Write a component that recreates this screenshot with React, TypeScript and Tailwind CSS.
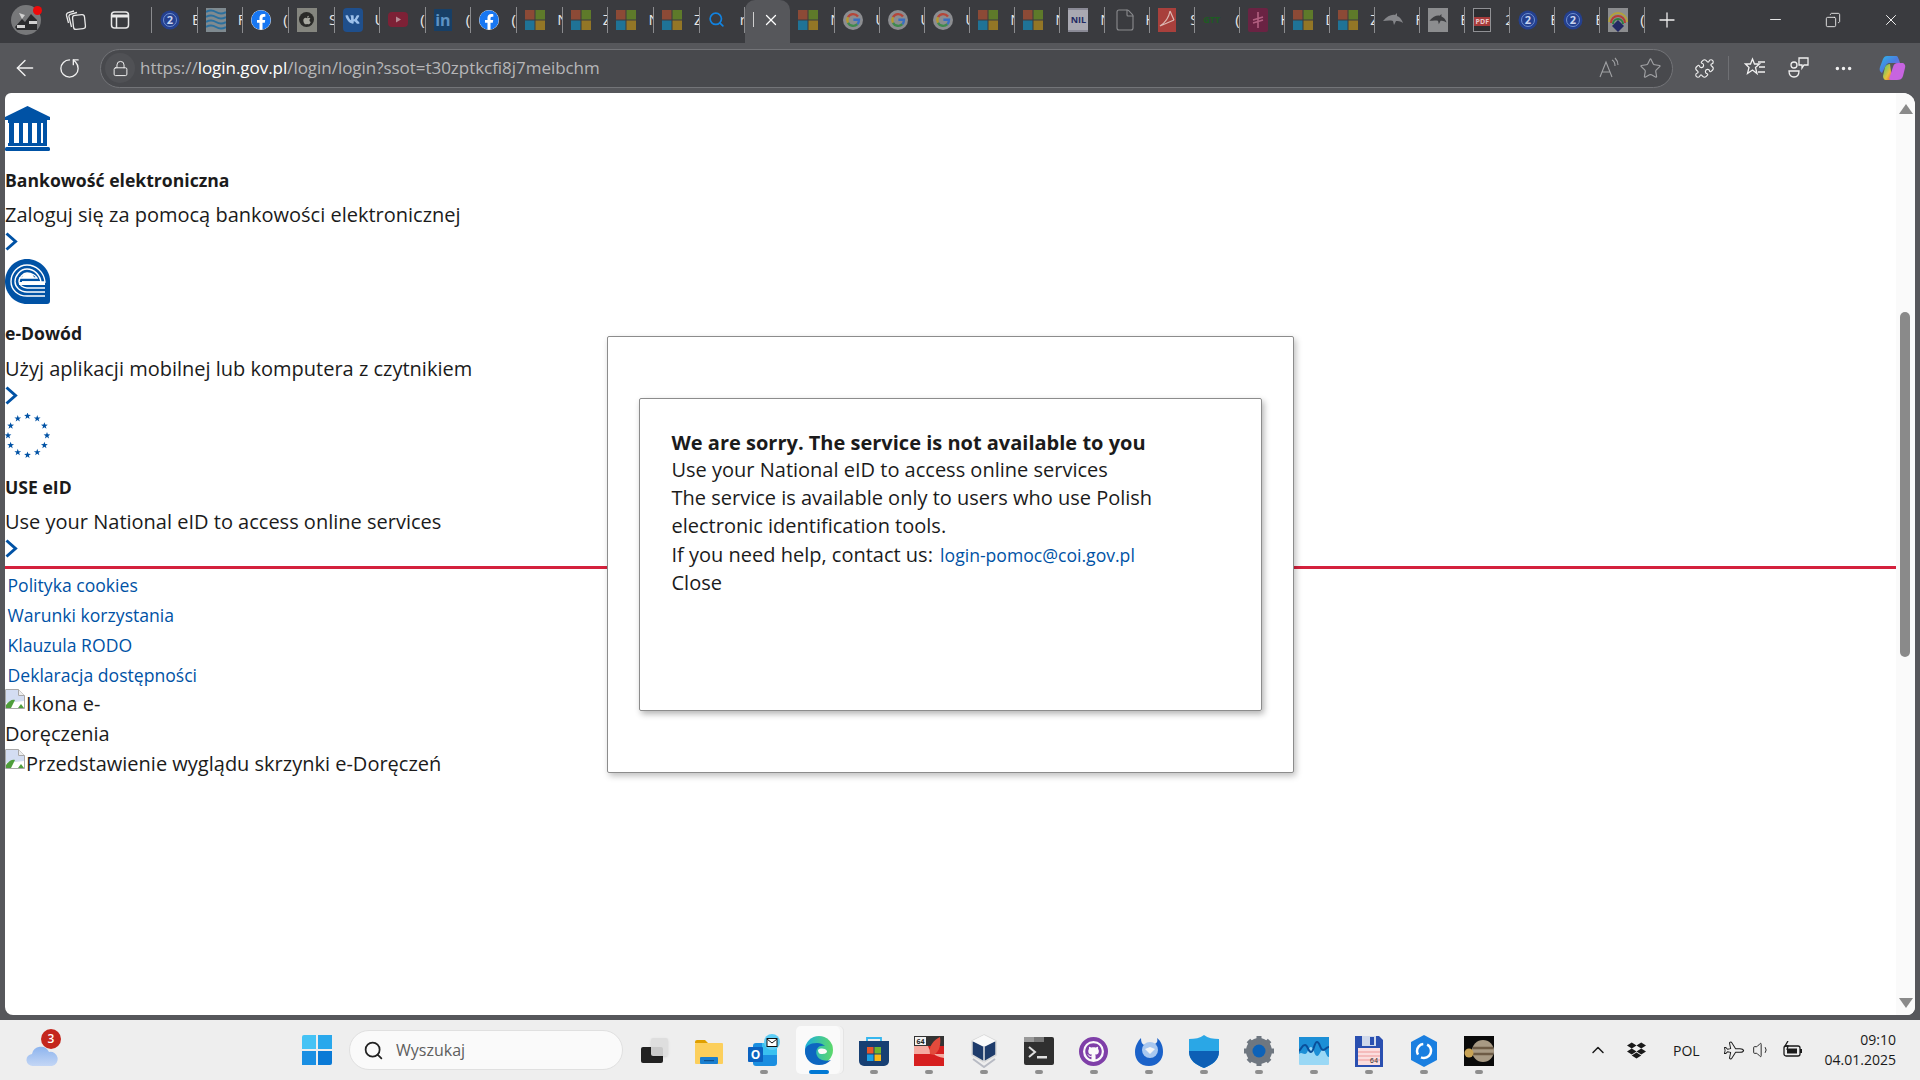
import React from "react";
import { ArrowLeft, RotateCw, Lock, Star, Plus, Minus, X, Search, ChevronUp, Ellipsis, Copy, File, Puzzle, Volume1, Plane } from "lucide-react";
import { FaFacebook, FaVk, FaApple, FaDropbox, FaGithub } from "react-icons/fa";

const MS = () => (
  <svg width="20" height="20" viewBox="0 0 20 20"><rect width="9.5" height="9.5" fill="#8c4a36"/><rect x="10.5" width="9.5" height="9.5" fill="#5e7a2a"/><rect y="10.5" width="9.5" height="9.5" fill="#1f7396"/><rect x="10.5" y="10.5" width="9.5" height="9.5" fill="#937626"/></svg>
);
const Two = () => (
  <svg width="20" height="20" viewBox="0 0 20 20"><circle cx="10" cy="10" r="9.5" fill="#24408f"/><circle cx="10" cy="10" r="6.5" fill="none" stroke="#6f8fd0" strokeWidth="1"/><text x="10" y="14" textAnchor="middle" fontSize="11" fontWeight="700" fill="#c9d5f0" fontFamily="Open Sans">2</text></svg>
);
const G = () => (
  <svg width="20" height="20" viewBox="0 0 20 20"><circle cx="10" cy="10" r="10" fill="#8c8d90"/><path d="M15 6.5A6 6 0 0 0 5 7.2" fill="none" stroke="#b5463a" strokeWidth="2.4"/><path d="M5 7.2a6 6 0 0 0 0 5.6" fill="none" stroke="#b59a2e" strokeWidth="2.4"/><path d="M5 12.8a6 6 0 0 0 9.4 1.4" fill="none" stroke="#3f8a4d" strokeWidth="2.4"/><path d="M10.4 9.8H16c0 2-.6 3.4-1.6 4.4" fill="none" stroke="#3a6fc0" strokeWidth="2.4"/></svg>
);
const Waves = () => (
  <svg width="20" height="24" viewBox="0 0 20 24"><rect width="20" height="24" fill="#7f8a90"/>{[4,9,14,19].map(y=><path key={y} d={`M0 ${y}q5 -3 10 0t10 0`} fill="none" stroke="#2a6f9e" strokeWidth="2"/>)}</svg>
);
const Apple = () => (<div className="w-[20px] h-[24px] bg-[#85867f] flex items-center justify-center"><div className="w-[15px] h-[15px] rounded-full bg-[#2a2a28] flex items-center justify-center"><FaApple size={10} color="#a8a8a0" /></div></div>);
const Vk = () => (<div className="w-[20px] h-[24px] rounded-[4px] bg-[#1f4f8c] flex items-center justify-center"><FaVk size={15} color="#9cc0ea" /></div>);
const Yt = () => (<svg width="20" height="15" viewBox="0 0 20 15"><rect width="20" height="15" rx="4" fill="#7d2136"/><path d="M8 4.500 13 7.500 8 10.500z" fill="#b58a94"/></svg>);
const In = () => (<div className="w-[18px] h-[22px] bg-[#173f66] flex items-center justify-center text-[16px] font-bold text-[#5e93c4] leading-none">in</div>);
const Fb = () => (<FaFacebook size={20} color="#1877f2" className="bg-white rounded-full" />);
const SearchI = () => (<Search size={17} color="#1283e0" strokeWidth={2.4} />);
const Nil = () => (<div className="w-[20px] h-[24px] bg-[#a9a9b2] border-y-2 border-[#8a8a96] flex items-center justify-center text-[9px] font-bold text-[#232a63] leading-none">NIL</div>);
const Doc = () => (<File size={24} color="#8a8b8e" strokeWidth={1.1} />);
const Pdfr = () => (<svg width="18" height="24" viewBox="0 0 18 24"><rect width="18" height="24" fill="#a8403c"/><path d="M2 18C8 14 11 9 12 3M2 18l14-6M12 3l4 9" stroke="#dcb8b3" strokeWidth="1.2" fill="none"/></svg>);
const Gtt = () => (<span className="text-[9px] font-bold text-[#1d5c22] leading-none w-[20px] block">GTT</span>);
const Pink = () => (<svg width="20" height="24" viewBox="0 0 20 24"><rect width="20" height="24" rx="2" fill="#6a2343"/><path d="M10 4v16M5 12l10-3M5 15l10-3" stroke="#b25f80" strokeWidth="1.6"/></svg>);
const Dolphin = () => (<svg width="20" height="14" viewBox="0 0 20 14"><path d="M0 8C4 3 9 1 12 2l2-2 0 3c3 1 5 4 6 7-3-2-5-2-7-2l-2 4-1-4C6 7 3 8 0 8z" fill="#85868a"/></svg>);
const Dolphin2 = () => (<div className="w-[20px] h-[24px] bg-[#8c8d8f] flex items-center justify-center"><svg width="18" height="12" viewBox="0 0 20 14"><path d="M0 8C4 3 9 1 12 2l2-2 0 3c3 1 5 4 6 7-3-2-5-2-7-2l-2 4-1-4C6 7 3 8 0 8z" fill="#3c3d40"/></svg></div>);
const Pdf = () => (<div className="w-[18px] h-[24px] bg-[#2d2e31] border border-[#909195] flex items-end justify-center pb-[5px]"><span className="w-full bg-[#a83b3b] text-[7px] font-bold text-[#e9c9c9] text-center leading-[9px]">PDF</span></div>);
const Rainbow = () => (<svg width="20" height="24" viewBox="0 0 20 24"><rect width="20" height="24" fill="#8c8d8f"/><path d="M1 14a9 9 0 0 1 18 0" fill="none" stroke="#b3a23a" strokeWidth="2"/><path d="M3 15a7 7 0 0 1 14 0" fill="none" stroke="#b53c36" strokeWidth="2"/><path d="M5 16a5 5 0 0 1 10 0" fill="none" stroke="#2f7f3f" strokeWidth="2"/><path d="M10 12l6 6-6 6-6-6z" fill="#232a63"/></svg>);

const tabs: [React.ReactNode, string][] = [
  [<Two />, "E"], [<Waves />, "F"], [<Fb />, "("], [<Apple />, "S"], [<Vk />, "U"], [<Yt />, "("], [<In />, "("], [<Fb />, "("],
  [<MS />, "N"], [<MS />, "Z"], [<MS />, "N"], [<MS />, "Z"], [<SearchI />, "r"],
];
const tabs2: [React.ReactNode, string][] = [
  [<MS />, "N"], [<G />, "U"], [<G />, "U"], [<G />, "U"], [<MS />, "N"], [<MS />, "N"], [<Nil />, "N"], [<Doc />, "H"], [<Pdfr />, "S"], [<Gtt />, "("], [<Pink />, "H"],
  [<MS />, "D"], [<MS />, "Z"], [<Dolphin />, "F"], [<Dolphin2 />, "E"], [<Pdf />, "2"], [<Two />, "E"], [<Two />, "E"], [<Rainbow />, "("],
];

const Tab = ({ icon, t, w }: { icon: React.ReactNode; t: string; w: string }) => (
  <div className={`${w} h-[26px] shrink-0 flex items-center border-r border-[#8a8b8e] overflow-hidden text-[#e8e8e8] text-[15px]`}>
    <div className="w-[38px] shrink-0 pl-[8px] flex items-center">{icon}</div>
    <span className="shrink-0 pl-[2px]">{t}</span>
  </div>
);

const Chevron = () => (
  <svg width="13" height="19" viewBox="0 0 13 19"><path d="M1.5 1.5 10.5 9.5 1.5 17.5" fill="none" stroke="#0052a5" strokeWidth="3"/></svg>
);

const Bank = () => (
  <svg width="45" height="45" viewBox="0 0 45 45" fill="#0052a5"><path d="M22.5 0 45 11v3H0v-3z"/><rect x="3" y="14" width="39" height="3"/><rect x="4" y="17" width="5" height="20"/><rect x="14" y="17" width="4" height="20"/><rect x="23" y="17" width="4" height="20"/><rect x="32" y="17" width="4" height="20"/><rect x="38" y="17" width="4" height="20"/><rect x="3" y="37" width="39" height="3"/><rect x="0" y="41" width="45" height="4" rx="1.5"/></svg>
);
const EDowod = () => (
  <svg width="45" height="45" viewBox="0 0 45 45"><path d="M22 0C10 0 0 10 0 22.5S10 45 22 45h20a3 3 0 0 0 3-3V22C45 10 34 0 22 0z" fill="#0052a5"/><path d="M40 37H22C13 37 6 31 6 22.5S13 6 22 6s17 7 18 17H17" fill="none" stroke="#fff" strokeWidth="1.4"/><path d="M40 33H22c-7 0-12-5-12-10.5S15 10 22 10s13 6 14 13H17" fill="none" stroke="#fff" strokeWidth="1.4"/><path d="M40 29H22c-4 0-8-3-8-6.500S18 14 22 14c5 0 9 3 10 5H14" fill="none" stroke="#fff" strokeWidth="1.4"/><path d="M17 19a6 5 0 0 1 12 0z" fill="#fff"/><rect x="14" y="23" width="26" height="3" fill="#fff"/></svg>
);
const EuStars = () => {
  const star = "M0-3.600.85-1.150 3.400-1.100 1.350.45 2.100 2.900 0 1.450-2.100 2.900-1.350.45-3.400-1.100-.85-1.150z";
  return (
    <svg width="45" height="45" viewBox="0 0 45 45" fill="#0052a5">
      {Array.from({ length: 12 }).map((_, i) => {
        const a = (i * Math.PI) / 6;
        return <path key={i} d={star} transform={`translate(${22.500 + 19.500 * Math.sin(a)} ${22.500 - 19.500 * Math.cos(a)})`} />;
      })}
    </svg>
  );
};
const Broken = () => (
  <svg width="20" height="20" viewBox="0 0 20 20" className="inline-block align-top shrink-0 mr-[1px]"><path d="M.5.5h13l6 6v13H.5z" fill="#fff" stroke="#a8a8a8"/><path d="M13.500.5v6h6" fill="#eee" stroke="#a8a8a8"/><path d="M1 1h12v6h6v5L1 14z" fill="#d3ddf2"/><path d="M1 19v-3c3-4 6-6 9-5l-4 8z" fill="#4f9e3c"/><path d="M13 19l3-4 3 4z" fill="#4f9e3c"/></svg>
);

const Item = ({ icon, title, desc, pb, dm = "mt-[8px]" }: { icon: React.ReactNode; title: string; desc: string; pb: string; dm?: string }) => (
  <div className={pb}>
    <div className="h-[45px]">{icon}</div>
    <div className="mt-[16px] h-[26px] leading-[26px] text-[17.6px] font-bold text-[#1b1b1b]">{title}</div>
    <div className={`${dm} h-[28px] leading-[28px] text-[20px] text-[#1b1b1b]`}>{desc}</div>
    <div className="mt-[3px] h-[19px]"><Chevron /></div>
  </div>
);

const Slot = ({ children, dot = true, active = false }: { children: React.ReactNode; dot?: boolean; active?: boolean }) => (
  <div className="w-[55px] h-[52px] shrink-0 flex flex-col items-center pt-[6px] relative">
    {active && <div className="absolute top-[-2px] left-[5px] w-[44px] h-[48px] bg-[#fafafa] rounded-[5px] shadow-[3px_0_0_#f4f4f4,4px_0_0_#e4e4e4]" />}
    <div className="h-[34px] w-[34px] flex items-center justify-center relative">{children}</div>
    {dot && <div className={`absolute bottom-[6px] h-[4px] rounded-full ${active ? "w-[20px] bg-[#0078d4]" : "w-[8px] bg-[#8e8e8e]"}`} />}
  </div>
);

export default function App() {
  return (
    <div className="w-[1920px] h-[1080px] overflow-hidden flex flex-col font-['Open_Sans',sans-serif] bg-[#56575b]">
      {/* Tab strip */}
      <div className="h-[43px] shrink-0 bg-[#3a3b3f] flex items-center pl-[10px] pb-[4px]">
        <div className="w-[30px] h-[30px] rounded-full bg-[#77787a] relative overflow-visible shrink-0 ml-[1px] -mr-[1px]">
          <svg width="30" height="30" viewBox="0 0 30 30" className="rounded-full"><path d="M4 22l7-8 3 3 6-8 6 6v10H6z" fill="#2a2b2d"/><path d="M8 8l6 2-3 4zM18 16h8v3h-8zM6 20h8v3H6z" fill="#d0d0d0"/></svg>
          <div className="absolute top-[1px] right-[-1px] w-[9px] h-[9px] rounded-full bg-[#ee0a0a]" />
        </div>
        <div className="ml-[24px] w-[24px] flex justify-center">
          <svg width="22" height="22" viewBox="0 0 22 22" fill="none" stroke="#e8e8e8" strokeWidth="1.3"><rect x="8" y="6" width="12" height="14" rx="2.500" transform="rotate(-6 14 13)"/><path d="M6.500 18 4 8c-.3-1.500.5-2.500 2-3l6-1.500M3.500 14 1.500 6.500C1.200 5 2 4 3.500 3.500L9 2"/></svg>
        </div>
        <div className="ml-[21px] mr-[1px] w-[22px] flex justify-center">
          <svg width="20" height="20" viewBox="0 0 20 20" fill="none" stroke="#e8e8e8" strokeWidth="1.500"><rect x="1.500" y="2" width="17" height="16" rx="3"/><path d="M6.500 6v12"/><path d="M1.500 6h17" strokeWidth="3"/></svg>
        </div>
        <div className="ml-[19px] flex items-center w-[1494px] shrink-0 border-l border-[#8a8b8e] h-[26px]">
          {tabs.map(([ic, t], i) => <Tab key={i} icon={ic} t={t} w="w-[45.65px]" />)}
          <div className="w-[45px] h-[43px] shrink-0 -mt-[7px] pb-[3px] bg-[#56575b] rounded-t-[10px] flex items-center text-[#e8e8e8] self-start">
            <span className="ml-[8px] mr-[8px] w-[1px] h-[15px] bg-[#cfcfcf]" />
            <X size={18} strokeWidth={1.700} color="#ffffff" />
          </div>
          {tabs2.map(([ic, t], i) => <Tab key={i} icon={ic} t={t} w="w-[45px]" />)}
        </div>
        <Plus size={24} strokeWidth={1.300} color="#efefef" className="ml-[10px] shrink-0" />
        <div className="ml-auto flex items-center text-[#f5f5f5]">
          <Minus size={17} strokeWidth={1.300} />
          <div className="ml-[41px]"><Copy size={16} strokeWidth={1.300} className="-scale-x-100" /></div>
          <div className="ml-[41px] mr-[20px]"><X size={18} strokeWidth={1.300} /></div>
        </div>
      </div>
      {/* Address row */}
      <div className="h-[50px] shrink-0 bg-[#56575b] flex items-center pl-[12px] pr-[7px]">
        <ArrowLeft size={26} strokeWidth={1.300} color="#f0f0f0" />
        <RotateCw size={23} strokeWidth={1.400} color="#f0f0f0" className="ml-[20px] -scale-x-100 rotate-[90deg]" />
        <div className="ml-[19px] w-[1573px] h-[39px] rounded-full bg-[#48494d] border border-[#737478] flex items-center pl-[4px] pr-[10px]">
          <div className="w-[30px] h-[30px] rounded-full bg-[#505155] flex items-center justify-center shrink-0">
            <Lock size={17} strokeWidth={1.400} color="#f0f0f0" />
          </div>
          <div className="ml-[5px] text-[17px] text-[#b6b6b8] whitespace-nowrap tracking-[-0.04px]">https://<span className="text-[#ffffff]">login.gov.pl</span>/login/login?ssot=t30zptkcfi8j7meibchm</div>
          <div className="ml-auto flex items-center gap-[18px] text-[#a0a1a4]">
            <svg width="22" height="22" viewBox="0 0 22 22" fill="none" stroke="#a0a1a4" strokeWidth="1.100"><path d="M1 20 7 5l6 15M3 15h8"/><path d="M13 3c2 1 3 3 3 6M16 1c2 2 3 4 3 7"/></svg>
            <Star size={23} strokeWidth={1.200} />
          </div>
        </div>
        <Puzzle size={21} strokeWidth={1.300} color="#f0f0f0" className="ml-[21px]" />
        <div className="ml-[13px] w-[1px] h-[24px] bg-[#6f7074]" />
        <div className="ml-[15px] relative w-[22px] h-[22px]">
          <svg width="22" height="22" viewBox="0 0 22 22" fill="none" stroke="#f0f0f0" strokeWidth="1.300"><path d="M8.500 2l2 5h5l-4 3.500 1.500 6-4.500-3.500-5 3.500 1.500-6L1.500 7h5z"/><path d="M14 5h7M15 10h6M14 15h7"/></svg>
        </div>
        <div className="ml-[22px] w-[22px] h-[24px]">
          <svg width="22" height="24" viewBox="0 0 22 24" fill="none" stroke="#f0f0f0" strokeWidth="1.300"><circle cx="6" cy="9" r="3"/><path d="M1 15h10c0 4-2 6-5 6s-5-2-5-6z"/><path d="M11 2h9v7h-4l-2 3v-3h-3z"/></svg>
        </div>
        <Ellipsis size={21} color="#f0f0f0" className="ml-[23px]" />
        <div className="ml-[24px] w-[28px] h-[28px]">
          <svg width="28" height="28" viewBox="0 0 28 28"><defs><linearGradient id="cp1" x1="0" y1="0" x2="1" y2="1"><stop offset="0" stopColor="#2bb8ea"/><stop offset=".5" stopColor="#4c7de0"/><stop offset="1" stopColor="#b45ad8"/></linearGradient><linearGradient id="cp2" x1="0" y1="0" x2="1" y2="1"><stop offset="0" stopColor="#38c77b"/><stop offset=".6" stopColor="#e6c23a"/><stop offset="1" stopColor="#ee5a3a"/></linearGradient></defs><path d="M9 2h9c2 0 2 2 3 4l1 3H12C9 9 8 11 7 13l-3 6c-2-1-3-3-2-6l3-8c1-2 2-3 4-3z" fill="url(#cp1)"/><path d="M14 26H8c-2 0-3-2-3-4l2-9c1-2 3-3 5-3l1 8c0 3 1 6 1 8z" fill="url(#cp2)"/><path d="M19 26h-6c-2 0-2-2-1-4l3-9c1-3 2-4 5-4h4c2 0 4 2 3 5l-2 8c-1 3-3 4-6 4z" fill="#c764e0"/></svg>
        </div>
      </div>
      {/* Page */}
      <div className="h-[922px] shrink-0 px-[5px]">
        <div className="relative h-full bg-white rounded-tl-[6px] rounded-tr-[12px] rounded-b-[8px] overflow-hidden flex">
          <div className="flex-1 min-w-0 pt-[13px] text-[#1b1b1b]">
            <Item pb="pb-[8px]" icon={<Bank />} title="Bankowość elektroniczna" desc="Zaloguj się za pomocą bankowości elektronicznej" />
            <Item pb="pb-[8px]" dm="mt-[9px]" icon={<EDowod />} title="e-Dowód" desc="Użyj aplikacji mobilnej lub komputera z czytnikiem" />
            <Item pb="pb-[8px]" icon={<EuStars />} title="USE eID" desc="Use your National eID to access online services" />
            <div className="border-t-[3px] border-[#d4213d] pt-[1px] pl-[2.500px] text-[17.6px] leading-[30px] text-[#0052a5]">
              <div>Polityka cookies</div>
              <div>Warunki korzystania</div>
              <div>Klauzula RODO</div>
              <div>Deklaracja dostępności</div>
            </div>
            <div className="text-[20px] leading-[30px] -mt-[1px]">
              <div className="w-[120px]"><Broken />Ikona e-Doręczenia</div>
              <div><Broken />Przedstawienie wyglądu skrzynki e-Doręczeń</div>
            </div>
          </div>
          <div className="w-[19px] shrink-0 bg-[#fafafa] flex flex-col items-center pt-[11px] pb-[7px]">
            <svg width="14" height="10" viewBox="0 0 14 10"><path d="M7 0l7 10H0z" fill="#8a8a8a"/></svg>
            <div className="mt-[198px] ml-[-1px] w-[10px] h-[345px] rounded-full bg-[#8a8a8a]" />
            <svg width="14" height="10" viewBox="0 0 14 10" className="mt-auto"><path d="M0 0h14L7 10z" fill="#8a8a8a"/></svg>
          </div>
          {/* Modal */}
          <div className="absolute left-[602px] top-[243px] w-[687px] h-[437px] bg-white border border-[#8c8c8c] rounded-[2px] shadow-[2px_3px_6px_rgba(0,0,0,0.25)] pl-[31px] pt-[61px]">
            <div className="w-[623px] h-[313px] border border-[#8c8c8c] rounded-[2px] shadow-[2px_3px_6px_rgba(0,0,0,0.3)] pl-[31.500px] pt-[30px] text-[20px] leading-[28px] text-[#1b1b1b]">
              <div className="font-bold h-[27px]">We are sorry. The service is not available to you</div>
              <div className="w-[520px]">Use your National eID to access online services</div>
              <div className="w-[520px]">The service is available only to users who use Polish electronic identification tools.</div>
              <div className="mt-[1px]">If you need help, contact us: <span className="ml-[2px] text-[17.6px] text-[#0052a5]">login-pomoc@coi.gov.pl</span></div>
              <div>Close</div>
            </div>
          </div>
        </div>
      </div>
      <div className="h-[5px] shrink-0 bg-[#56575b]" />
      {/* Taskbar */}
      <div className="h-[60px] shrink-0 bg-[#eeeeee] flex items-center relative">
        <div className="ml-[26px] w-[32px] h-[36px] relative shrink-0">
          <svg width="32" height="24" viewBox="0 0 32 24" className="absolute bottom-0 left-0"><defs><linearGradient id="cl" x1="0" y1="0" x2="0" y2="1"><stop offset="0" stopColor="#8db4ee"/><stop offset="1" stopColor="#c3d6f5"/></linearGradient></defs><path d="M7 22a6 6 0 0 1-1-12 9 9 0 0 1 17-2 7 7 0 0 1 3 14z" fill="url(#cl)"/></svg>
          <div className="absolute top-[-3px] right-[-3px] w-[20px] h-[20px] rounded-full bg-[#c4261d] text-white text-[12px] font-semibold flex items-center justify-center">3</div>
        </div>
        <div className="ml-[244px] w-[30px] h-[30px] grid grid-cols-2 gap-[1.500px] shrink-0">
          <div className="bg-[#45c3f5] rounded-tl-[2px]" /><div className="bg-[#29a8ec]" /><div className="bg-[#1a8fe3]" /><div className="bg-[#0a7ad6] rounded-br-[2px]" />
        </div>
        <div className="ml-[17px] w-[274px] h-[40px] rounded-full bg-[#fafafa] border border-[#e0e0e0] flex items-center pl-[13px] shrink-0">
          <Search size={21} strokeWidth={2} color="#222" />
          <span className="ml-[12px] text-[16px] text-[#5e5e5e]">Wyszukaj</span>
        </div>
        <div className="ml-[3px] flex items-end h-[52px] self-end">
          <Slot dot={false}><div className="relative w-[26px] h-[24px]"><div className="absolute left-0 bottom-0 w-[22px] h-[16px] bg-[#222] rounded-[2px]" /><div className="absolute right-[-1px] top-[-1px] w-[17px] h-[18px] bg-[#dcdcdc]/90 rounded-[2px] shadow" /></div></Slot>
          <Slot dot={false}><svg width="30" height="28" viewBox="0 0 30 28"><path d="M1 5a2 2 0 0 1 2-2h8l3 3h-13z" fill="#e0a000"/><rect x="1" y="6" width="28" height="21" rx="1" fill="#fccf5c"/><rect x="6" y="20" width="18" height="7" rx="1" fill="#1a7fd0"/><rect x="10" y="23" width="10" height="1.200" fill="#0d4f8c"/></svg></Slot>
          <Slot><svg width="36" height="34" viewBox="0 0 36 34" className="shrink-0 ml-[3px]"><rect x="6" y="9" width="24" height="23" rx="3" fill="#1a8ee0"/><path d="M15 9h15v12H15z" fill="#39c1f0"/><circle cx="25" cy="8" r="8" fill="#5fcdf5"/><rect x="20" y="4.500" width="10" height="8" fill="#fff" stroke="#111"/><path d="M20 5l5 4 5-4" fill="none" stroke="#111"/><rect x="1" y="13" width="15" height="15" rx="1" fill="#0b62c0"/><text x="8.500" y="25" textAnchor="middle" fontSize="12" fontWeight="700" fill="#fff" fontFamily="Open Sans">O</text></svg></Slot>
          <Slot active><svg width="30" height="30" viewBox="0 0 30 30"><defs><linearGradient id="ed" x1="0" y1="0" x2="1" y2="0"><stop offset="0" stopColor="#1baedb"/><stop offset="1" stopColor="#5dd96a"/></linearGradient></defs><circle cx="15" cy="14" r="14" fill="url(#ed)"/><path d="M1 15c0 8 6 14 14 14 5 0 9-2 12-5-3 1-8 1-11-1-3-2-5-6-3-10 1-3 5-4 8-3-2-2-5-3-8-3C6 7 1 10 1 15z" fill="#0d66c0"/><path d="M14 14c2-2 7-2 9 1 0 3-4 3-6 3-2 0-3-2-3-4z" fill="#fafafa"/></svg></Slot>
          <Slot><svg width="30" height="30" viewBox="0 0 30 30"><path d="M8 6V2h14v4" fill="none" stroke="#35b6ee" strokeWidth="1.800"/><path d="M0 5h30v20a5 5 0 0 1-5 5H5a5 5 0 0 1-5-5z" fill="#173f73"/><rect x="8" y="11" width="6.500" height="6.500" fill="#e8562a"/><rect x="15.500" y="11" width="6.500" height="6.500" fill="#6eb52e"/><rect x="8" y="18.500" width="6.500" height="6.500" fill="#1aa1e6"/><rect x="15.500" y="18.500" width="6.500" height="6.500" fill="#f9b916"/></svg></Slot>
          <Slot><svg width="30" height="30" viewBox="0 0 30 30"><rect width="30" height="30" fill="#333"/><path d="M0 10h30v20H0z" fill="#d61f1f"/><path d="M0 10h14c2 6 6 10 16 12v-4H0z" fill="#f5aaa0"/><path d="M16 18C14 10 20 4 26 1c1 6 0 14-6 18z" fill="#e24b3c"/><rect x="1" y="1" width="11" height="8" fill="#f2f2f2"/><text x="6.500" y="8" textAnchor="middle" fontSize="7" fontWeight="700" fill="#222" fontFamily="Open Sans">64</text></svg></Slot>
          <Slot><svg width="28" height="34" viewBox="0 0 28 34"><path d="M14 1 26 7v14l-12 7L2 21V7z" fill="#1f3c6b" stroke="#d8d8d8" strokeWidth="1.500"/><path d="M14 1 26 7l-12 6L2 7z" fill="#fafafa"/><path d="M14 13v15" stroke="#e8e8e8" strokeWidth="1.500"/><path d="M3 25l11 8 11-8" fill="none" stroke="#b8bbc4" strokeWidth="2"/></svg></Slot>
          <Slot><svg width="30" height="28" viewBox="0 0 30 28"><rect width="30" height="28" rx="2" fill="#2f2f2f"/><rect width="10" height="5" fill="#9a9a9a"/><rect x="10" width="10" height="5" fill="#777"/><path d="M5 10l6 5-6 5" fill="none" stroke="#e0e0e0" strokeWidth="2"/><rect x="13" y="19" width="10" height="2.500" fill="#e0e0e0"/></svg></Slot>
          <Slot><div className="w-[29px] h-[29px] rounded-full bg-[#fafafa] border-[4px] border-[#7f3fa8] flex items-center justify-center"><FaGithub size={17} color="#7f3fa8" /></div></Slot>
          <Slot><svg width="30" height="32" viewBox="0 0 30 32"><path d="M15 31C6 31 1 25 1 17 1 11 4 6 7 3c0 4 1 6 3 7 2-2 7-3 11-1 2-1 3-3 2-6 4 3 6 8 6 14 0 8-6 14-14 14z" fill="#1b62c9"/><circle cx="16" cy="15" r="8" fill="#a9c8f0"/><path d="M11 14l5 5 5-5-5-2z" fill="#f5f5f5"/></svg></Slot>
          <Slot><svg width="30" height="33" viewBox="0 0 30 33"><path d="M15 0c4 3 9 4 15 4v13c0 8-7 13-15 16C7 30 0 25 0 17V4c6 0 11-1 15-4z" fill="#2aa7e6"/><path d="M15 16H0v1c0 8 7 13 15 16zM15 16h15v1c0 8-7 13-15 16z" fill="#0d5fb5"/></svg></Slot>
          <Slot><svg width="30" height="30" viewBox="0 0 30 30"><circle cx="15" cy="15" r="10" fill="none" stroke="#6f7780" strokeWidth="6"/><g stroke="#6f7780" strokeWidth="5">{[0,45,90,135].map(a=><path key={a} d="M15 0v30" transform={`rotate(${a} 15 15)`}/>)}</g><circle cx="15" cy="15" r="9.500" fill="#6f7780"/><circle cx="15" cy="15" r="6.500" fill="#0d62b8"/></svg></Slot>
          <Slot><svg width="30" height="28" viewBox="0 0 30 28"><rect width="30" height="28" rx="1" fill="#9ad8f5"/><path d="M0 0h30v20c-3 0-3-7-6-7s-3 6-6 6-3-9-6-9-3 7-6 7-3-2-6 0z" fill="#1c8fd6"/><path d="M0 14c3-3 3-6 6-6s3 7 6 7 3-10 6-10 3 8 6 8 3-3 6-3" fill="none" stroke="#0a4f9a" strokeWidth="2"/></svg></Slot>
          <Slot><svg width="28" height="32" viewBox="0 0 28 32"><path d="M0 1h24l4 4v27H0z" fill="#2a4fb0"/><rect x="7" y="1" width="14" height="10" fill="#cfd8ea"/><rect x="15" y="2" width="4" height="8" fill="#2a4fb0"/><rect x="3" y="13" width="22" height="17" fill="#fbdede"/><path d="M3 17h22M3 21h22M3 25h22" stroke="#e99" strokeWidth="1"/><text x="19" y="28" textAnchor="middle" fontSize="7" fill="#333" fontFamily="Liberation Mono">64</text></svg></Slot>
          <Slot><svg width="26" height="32" viewBox="0 0 26 32"><path d="M13 0 26 7v18l-13 7L0 25V7z" fill="#1a7fe0"/><circle cx="13" cy="16" r="7" fill="none" stroke="#fff" strokeWidth="2.500" strokeDasharray="14 4"/></svg></Slot>
          <Slot><svg width="30" height="30" viewBox="0 0 30 30"><rect width="30" height="30" fill="#0a0a0a"/><circle cx="19" cy="15" r="11" fill="#a89a84"/><path d="M9 12h20M8 18h21" stroke="#6d5b45" strokeWidth="2.500"/><circle cx="5" cy="17" r="4.500" fill="#c8a355"/></svg></Slot>
        </div>
        <div className="ml-auto flex items-center pr-[24px] text-[#1a1a1a]">
          <ChevronUp size={20} strokeWidth={1.800} />
          <FaDropbox size={19} className="ml-[19px]" />
          <span className="ml-[26.500px] text-[14px]">POL</span>
          <Plane size={21} strokeWidth={1.100} className="ml-[22.500px] rotate-45" />
          <Volume1 size={20} strokeWidth={1.100} className="ml-[9px]" />
          <svg width="22" height="18" viewBox="0 0 22 18" fill="none" stroke="#1a1a1a" strokeWidth="1.300" className="ml-[9.500px]"><rect x="2" y="5" width="16" height="10" rx="2"/><rect x="5" y="7.500" width="10" height="5" fill="#1a1a1a" stroke="none"/><rect x="18" y="8" width="2" height="4" fill="#1a1a1a" stroke="none"/><path d="M6 0 3 5h3L5 9"/></svg>
          <div className="ml-[21px] text-right text-[14px] leading-[20px]">
            <div>09:10</div>
            <div>04.01.2025</div>
          </div>
        </div>
      </div>
    </div>
  );
}
